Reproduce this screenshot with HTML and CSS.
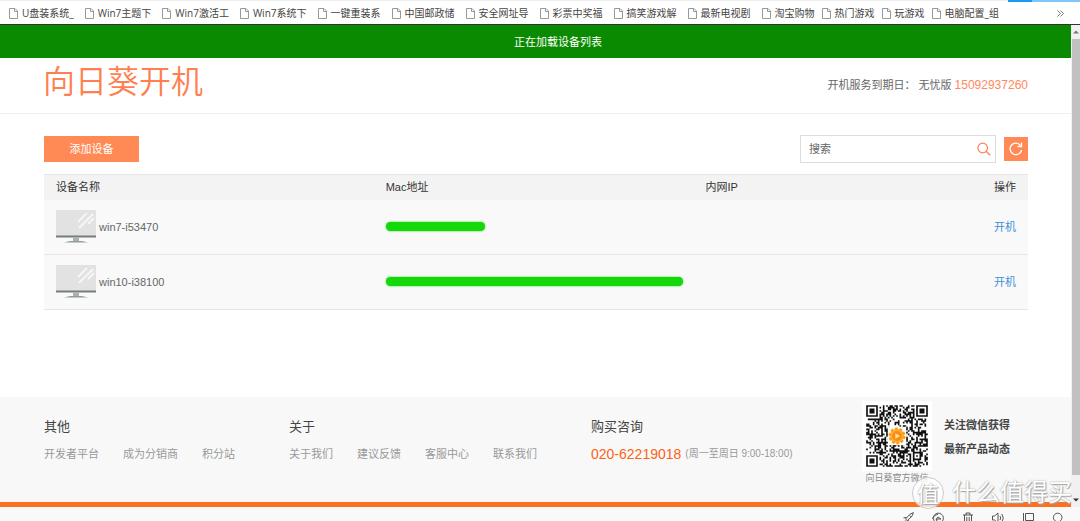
FILE: index.html
```html
<!DOCTYPE html>
<html lang="zh-CN">
<head>
<meta charset="utf-8">
<meta name="viewport" content="width=device-width, initial-scale=1">
<title>向日葵开机</title>
<link rel="stylesheet" href="styles.css">
</head>
<body>
<svg class="defs" aria-hidden="true">
  <symbol id="file" viewBox="0 0 9 11"><path d="M.5.5H6L8.5 3v7.5H.5ZM5.500 .5V3.500H8.500" fill="#fff" stroke="#999"/></symbol>
  <symbol id="monitor" viewBox="0 0 40 33">
    <path d="M0 0h40v26H0Z" fill="#e2e2e2"/>
    <path d="M22 12 31 3M23 18 37 4M32 14l6-6" stroke="#f6f6f6" stroke-width="2"/>
    <path d="M0 25.500h40v2H0Z" fill="#777c7c"/>
    <path d="M17 27.500h6v3.500h-6Z" fill="#a9b1b1"/>
    <path d="M8 32.500 14 31h12l6 1.500Z" fill="#929a9a"/>
  </symbol>
</svg>
<nav class="bookmarks" aria-label="书签">
  <a class="cut" href="#"><svg><use href="#file"/></svg>U盘装系统_</a>
  <a class="cut" href="#"><svg><use href="#file"/></svg>Win7主题下</a>
  <a class="cut" href="#"><svg><use href="#file"/></svg>Win7激活工</a>
  <a class="cut" href="#"><svg><use href="#file"/></svg>Win7系统下</a>
  <a class="cut" href="#"><svg><use href="#file"/></svg>一键重装系</a>
  <a class="cut" href="#"><svg><use href="#file"/></svg>中国邮政储</a>
  <a class="cut" href="#"><svg><use href="#file"/></svg>安全网址导</a>
  <a class="cut" href="#"><svg><use href="#file"/></svg>彩票中奖福</a>
  <a class="cut" href="#"><svg><use href="#file"/></svg>搞笑游戏解</a>
  <a class="cut" href="#"><svg><use href="#file"/></svg>最新电视剧</a>
  <a href="#"><svg><use href="#file"/></svg>淘宝购物</a>
  <a href="#"><svg><use href="#file"/></svg>热门游戏</a>
  <a href="#"><svg><use href="#file"/></svg>玩游戏</a>
  <a href="#"><svg><use href="#file"/></svg>电脑配置_组</a>
  <button class="more" type="button" aria-label="更多书签"><svg viewBox="0 0 7 7"><path d="m.5.5 3 3-3 3m3-6 3 3-3 3" fill="none" stroke="#777"/></svg></button>
  <span class="tab-edge"></span>
</nav>
<div class="window">
  <div class="page">
    <div class="notice" role="status">正在加载设备列表</div>
    <header class="header">
      <h1>向日葵开机</h1>
      <p>开机服务到期日： 无忧版 <span>15092937260</span></p>
    </header>
    <main class="main">
      <div class="toolbar">
        <button class="add" type="button">添加设备</button>
        <form class="search">
          <input type="text" placeholder="搜索" aria-label="搜索">
          <button type="button" aria-label="搜索"><svg viewBox="0 0 14 14"><path d="M10.500 6a4.800 4.800 0 1 1-9.600 0 4.800 4.800 0 0 1 9.600 0ZM9.300 9.500l4 3.800" fill="none" stroke="#ff7d50" stroke-width="1.200"/></svg></button>
        </form>
        <button class="refresh" type="button" aria-label="刷新"><svg viewBox="0 0 14 14"><path d="M12.600 8A5.800 5.800 0 1 1 11.500 3.300M12.500.5V4.500H8.500" fill="none" stroke="#fff" stroke-width="1.300"/></svg></button>
      </div>
      <table class="devices">
        <thead><tr><th class="name">设备名称</th><th class="mac">Mac地址</th><th>内网IP</th><th class="action">操作</th></tr></thead>
        <tbody>
          <tr><td><div class="device"><svg><use href="#monitor"/></svg>win7-i53470</div></td><td><span class="mask short"></span></td><td></td><td class="action"><a href="#">开机</a></td></tr>
          <tr><td><div class="device"><svg><use href="#monitor"/></svg>win10-i38100</div></td><td><span class="mask"></span></td><td></td><td class="action"><a href="#">开机</a></td></tr>
        </tbody>
      </table>
    </main>
    <footer class="footer">
      <section><h2>其他</h2><div class="links"><a href="#">开发者平台</a><a href="#">成为分销商</a><a href="#">积分站</a></div></section>
      <section><h2>关于</h2><div class="links"><a href="#">关于我们</a><a href="#">建议反馈</a><a href="#">客服中心</a><a href="#">联系我们</a></div></section>
      <section><h2>购买咨询</h2><div class="phone"><strong>020-62219018</strong><span>(周一至周日 9:00-18:00)</span></div></section>
      <div class="wechat">
        <figure>
          <svg viewBox="-2.500 -2.500 42 42" role="img" aria-label="微信二维码">
            <path d="M-2.500-2.500h42v42h-42Z" fill="#fff"/>
            <path id="modules" fill="#111"/>
            <path d="M13 13h11v11H13Z" fill="#fff"/>
            <circle cx="18.500" cy="18.500" r="4.300" fill="#ffb52e" stroke="#f9a01b" stroke-width="1.600" stroke-dasharray="1.700 1"/>
            <circle cx="18.500" cy="18.500" r="3" fill="#f98a1c"/>
            <path d="m17.500 16.800 3 1.700-3 1.700Z" fill="#ffe28a"/>
          </svg>
          <figcaption>向日葵官方微信</figcaption>
        </figure>
        <p>关注微信获得<br>最新产品动态</p>
      </div>
    </footer>
  </div>
  <div class="scrollbar" aria-hidden="true">
    <svg viewBox="0 0 9 14"><path d="M2 8.500h6l-3-3Z" fill="#777"/></svg>
    <span></span>
    <svg class="down" viewBox="0 0 9 14"><path d="M2 5.500h6l-3 3Z" fill="#333"/></svg>
  </div>
</div>
<div class="statusbar">
  <button type="button" aria-label="加速"><svg viewBox="0 0 12 12"><path d="M3.500 7 8 2.200 11.400.6 10 4.200 5.200 8.600ZM4.500 5.500 1.500 5.800M6.500 7.500l-.5 3M3.300 8.500.8 11M7.500 3.500l1.300 1.300"/></svg></button>
  <button type="button" aria-label="浏览器"><svg viewBox="0 0 12 12"><path d="M3 9.800A5 5 0 1 1 10.500 9M.5 7C1 4 4 2.500 6 2.500M4 7.500l2-2.500 3 2H4.500Q4 9.500 7 10.500"/></svg></button>
  <button type="button" aria-label="清理"><svg viewBox="0 0 12 12"><path d="M1 3h10M4 3V1h4v2M2.500 3v8.500h7V3M4.800 5v5M7.200 5v5"/></svg></button>
  <button type="button" aria-label="声音"><svg viewBox="0 0 12 12"><path d="M.5 4v4h2L6 11V1L2.500 4ZM8 4q1.500 2 0 4M9.800 2q3 4 0 8"/></svg></button>
  <button type="button" aria-label="窗口"><svg viewBox="0 0 12 12"><path d="M3.500 1.500h8v7h-8ZM1.500 1v10.500h6"/></svg></button>
  <button type="button" aria-label="查找"><svg viewBox="0 0 12 12"><path d="M10 5.500a4.300 4.300 0 1 1-8.600 0 4.300 4.300 0 0 1 8.600 0ZM8.800 8.800l2.700 2.700"/></svg></button>
</div>
<div class="watermark"><b>值</b><span>什么值得买</span></div>
<script src="script.js"></script>
</body>
</html>
```
FILE: styles.css
```css
* { box-sizing: border-box; }
body {
  position: relative;
  display: flex;
  flex-direction: column;
  min-height: 100vh;
  margin: 0;
  background: #fff;
  color: #666;
  font: 11px/16px "Liberation Sans", "Noto Sans CJK SC", sans-serif;
}
h1, h2, p, figure { margin: 0; font-weight: 400; }
a { color: inherit; text-decoration: none; }
button { padding: 0; border: 0; background: none; font: inherit; }
svg { display: block; flex: none; }
.defs { position: absolute; width: 0; height: 0; }

.bookmarks {
  position: relative;
  display: flex;
  align-items: center;
  gap: 7px;
  height: 25px;
  padding: 1px 16px 0 9px;
  border-top: 1px solid #eee;
  border-bottom: 1px solid #333;
  color: #444;
  font: 10px/16px "Open Sans", "Noto Sans CJK SC", sans-serif;
  white-space: nowrap;
}
.bookmarks a { display: flex; align-items: center; gap: 4px; }
.bookmarks a svg { width: 9px; height: 11px; }
.bookmarks .cut { padding-right: 4px; }
.more { margin-left: auto; }
.more svg { width: 7px; height: 7px; }
.tab-edge {
  position: absolute;
  top: -1px;
  right: 0;
  width: 72px;
  height: 2px;
  background: linear-gradient(90deg, #1a98f5 24px, #7cc6fa 24px);
}

.window { display: flex; flex: 1; }
.page { display: flex; flex: 1; flex-direction: column; border-bottom: 5px solid #fb7021; }
.notice {
  padding: 9px 0 8px 45px;
  background: #0a8a00;
  color: #fff;
  text-align: center;
}
.header {
  display: flex;
  align-items: center;
  justify-content: space-between;
  padding: 1px 43px 14px 43px;
  border-bottom: 1px solid #f0f0f0;
}
.header h1 {
  color: #ff7f50;
  font: 350 32px/40px "Noto Sans CJK SC", sans-serif;
}
.header p { padding-top: 11px; }
.header span { color: #ff8860; font-size: 12px; }

.main { padding: 21px 43px 20px 44px; }
.toolbar { display: flex; align-items: center; gap: 8px; margin-bottom: 11px; }
.add { width: 95px; height: 26px; margin-right: auto; background: #ff8a55; color: #fff; }
.search {
  display: flex;
  align-items: center;
  width: 196px;
  height: 28px;
  padding: 0 4px 0 8px;
  border: 1px solid #ddd;
}
.search input {
  flex: 1;
  min-width: 0;
  padding: 0;
  border: 0;
  outline: 0;
  font: inherit;
}
.search input::placeholder { color: #666; }
.search svg, .refresh svg { width: 14px; height: 14px; }
.refresh { display: grid; place-items: center; width: 24px; height: 24px; background: #ff8a55; }

.devices { width: 100%; border-collapse: collapse; table-layout: fixed; background: #f9f9f9; }
.devices tr { border-top: 1px solid #e6e6e6; border-bottom: 1px solid #e6e6e6; }
.devices thead tr { border-bottom: 0; background: #f3f3f3; color: #333; }
.devices tbody tr:first-child { border-top: 0; }
.devices th { padding: 4px 12px 5px; font-weight: 400; text-align: left; }
.devices td { padding: 10px 12px 11px; }
.devices .name { width: 33.5%; }
.devices .mac { width: 32.5%; }
.devices .action { text-align: right; }
.devices td.action { color: #3d8fd6; }
.device { display: flex; align-items: center; gap: 3px; }
.device svg { width: 40px; height: 33px; }
.mask {
  display: block;
  width: 297px;
  height: 9px;
  border-radius: 5px;
  background: #14d80a;
  box-shadow: 0 0 2px #14d80a;
}
.mask.short { width: 99px; }

.footer {
  display: grid;
  grid-template-columns: 245fr 302fr 271fr 166fr;
  margin-top: auto;
  padding: 4px 43px 16px 44px;
  background: #f8f8f8;
}
.footer section { padding-top: 16px; }
.footer h2 { color: #444; font-size: 13px; line-height: 20px; }
.links, .phone { display: flex; align-items: center; margin-top: 8px; line-height: 18px; white-space: nowrap; }
.links { gap: 24px; color: #999; }
.phone { gap: 4px; color: #999; font-size: 10px; }
.phone strong { color: #fb6414; font-size: 14px; font-weight: 400; }
.wechat { display: flex; gap: 12px; }
.wechat svg { width: 70px; height: 70px; }
.wechat figcaption { margin-top: -1px; color: #888; font-size: 9px; line-height: 16px; text-align: center; }
.wechat p { padding-top: 12px; color: #444; font-weight: 700; line-height: 24px; white-space: nowrap; }

.scrollbar { display: flex; flex-direction: column; width: 9px; background: #f1f1f1; }
.scrollbar span { flex: 1; margin-left: 1px; background: #c1c1c1; }
.scrollbar svg { width: 9px; height: 14px; }
.scrollbar .down { margin-top: 18px; }
.statusbar {
  display: flex;
  justify-content: flex-end;
  gap: 18px;
  height: 14px;
  padding: 5px 16px 0;
  overflow: hidden;
  background: #f9f9f9;
}
.statusbar button { flex: none; height: 12px; }
.statusbar svg { width: 12px; height: 12px; fill: none; stroke: #555; }

.watermark {
  position: absolute;
  right: 8px;
  bottom: 9px;
  display: flex;
  align-items: center;
  gap: 8px;
  color: #fff;
  font: 24px/34px "Noto Sans CJK SC", sans-serif;
  text-shadow: 0 0 2px #999, 1px 1px 1px #aaa;
  pointer-events: none;
}
.watermark span { padding-bottom: 4px; }
.watermark b {
  width: 32px;
  height: 32px;
  border: 1px solid #ccc;
  border-radius: 50%;
  background: #fffc;
  font-size: 22px;
  font-weight: 400;
  line-height: 28px;
  text-align: center;
}
```
FILE: script.js
```js
// Fills the QR symbol: finder, alignment and timing patterns plus data modules.
const size = 37;
let seed = 20;
function nextBit() {
  seed = (seed * 1103515245 + 12345) % 2147483648;
  return seed > 1073741824;
}
function ring(x, y, cx, cy) {
  return Math.max(Math.abs(x - cx), Math.abs(y - cy));
}
function isDark(x, y) {
  const data = nextBit();
  for (const [cx, cy] of [[3, 3], [33, 3], [3, 33]]) {
    const d = ring(x, y, cx, cy);
    if (d <= 4) return d < 2 || d === 3;
  }
  const a = ring(x, y, 30, 30);
  if (a <= 2) return a !== 1;
  if (x === 6 || y === 6) return (x + y) % 2 === 0;
  return data;
}
let path = "";
for (let y = 0; y < size; y++) {
  for (let x = 0; x < size; x++) {
    if (isDark(x, y)) path += `M${x} ${y}h1v1h-1Z`;
  }
}
document.getElementById("modules").setAttribute("d", path);
```
